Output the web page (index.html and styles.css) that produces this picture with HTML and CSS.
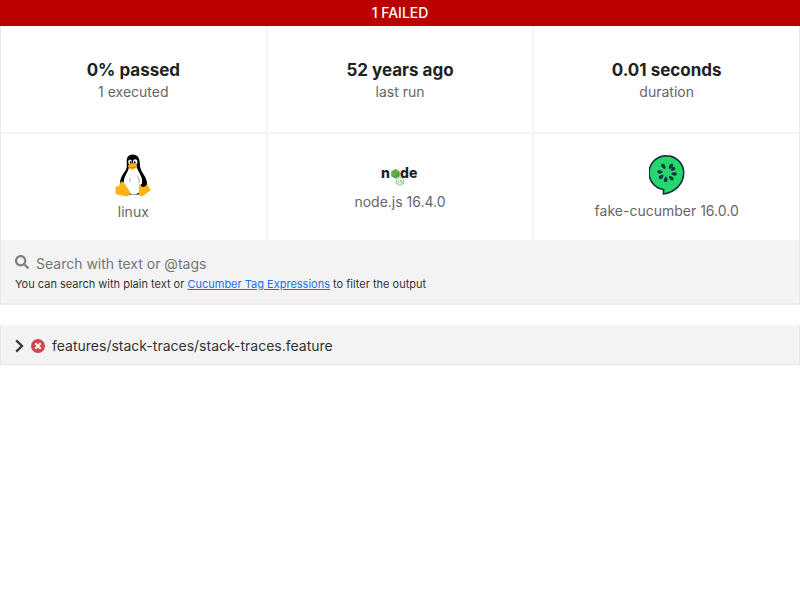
FILE: index.html
```html
<!DOCTYPE html>
<html lang="en">
<head>
  <meta charset="utf-8">
  <title>Cucumber Report</title>
  <link rel="stylesheet" href="styles.css">
</head>
<body>
  <header class="banner">1 FAILED</header>
  <main>
    <section class="report">
      <dl class="summary">
        <div class="cell"><dt class="value">0% passed</dt><dd class="label">1 executed</dd></div>
        <div class="cell"><dt class="value">52 years ago</dt><dd class="label">last run</dd></div>
        <div class="cell"><dt class="value">0.01 seconds</dt><dd class="label">duration</dd></div>
        <div class="cell icon-cell">
          <dt class="logo">
            <svg width="36" height="43" viewBox="0 -1 36 43" overflow="visible" aria-hidden="true">
              <path fill="#000" d="M17.5 0.5C13.600 .5 11.500 3.500 11.700 7.500C11.800 11 12.200 13.500 10.800 16C8.500 19.500 6 22.500 5.300 26.500C4.500 30 4.800 33 6.500 36L14 40.500H24L31 35C33 31 32 25.500 29.300 21.500C27 18 25.500 15.500 25 12C24.700 9.500 25 6 23.300 3.300C22 1.500 20 .5 17.500 .5Z"/>
              <path fill="#fff" d="M14 13.500C13.500 17 10.500 20 9.300 24.500C8.300 28 8.700 31 10.500 33L15 39.500C18 41 22 40.500 25 38L26 30.500C27.500 30 27.500 27 26.500 23.500C25 19.500 23 17 21.500 13Z"/>
              <ellipse cx="15" cy="8" rx="1.800" ry="2.600" fill="#fff"/>
              <ellipse cx="20.200" cy="8" rx="2.200" ry="2.800" fill="#fff"/>
              <ellipse cx="15.500" cy="8.500" rx=".8" ry="1.200"/>
              <ellipse cx="19.700" cy="8.500" rx=".9" ry="1.300"/>
              <path fill="#fbb416" d="M13 11.800C14 10.500 16 9.300 17.300 9.300C19.200 9.500 21.500 10.500 22.300 11.700C22.500 13.300 18.500 15.800 17 15.800C15.300 15.700 12.700 13.500 13 11.800Z"/>
              <path fill="none" stroke="#9b6500" stroke-width=".6" d="M13.500 12.300C16 14.500 18 14.300 21.800 12"/>
              <path fill="none" stroke="#777" stroke-width=".6" d="M15 23.500V28M22 21.500C24 23.500 24.500 26 24 29"/>
              <path fill="#fbb416" d="M6.500 27.500C8.500 27.500 10 30 11.500 32.700C13 35 15 36.500 14.800 39C14.600 41.800 12 43 9 42C6 41 2.500 41 .8 40C-.3 39 1 37 .6 34.500C.2 32.500 1.500 32.300 3.500 32C5.300 31.200 5 28 6.500 27.500Z"/>
              <path fill="#fbb416" d="M25.300 29.500C25.500 32.500 27.500 33.500 30 32.500C31.500 31.500 31.500 29.500 32.500 30C33.500 31.500 33 33 34.500 34.300C36 35.500 36 36 35 37C32.500 38.500 31 39.500 29.500 41C27.500 43 24.500 42.500 24 40C23.700 37 24.500 34.500 24 31.500C24 30 24.500 29.500 25.300 29.500Z"/>
            </svg>
          </dt>
          <dd class="label">linux</dd>
        </div>
        <div class="cell icon-cell">
          <dt class="logo">
            <svg width="36" height="23" viewBox="0 0 36 23" overflow="visible" aria-hidden="true">
              <g class="wordmark">
                <text x="-1" y="15">n</text>
                <text x="18" y="15">d</text>
                <text x="27" y="15">e</text>
              </g>
              <path fill="#539e43" d="M13.500 6L17.700 8.400V13.200L13.500 15.600L9.300 13.200V8.400Z"/>
              <path fill="#6cc24a" opacity=".5" d="M13.500 6L17.700 8.400L11.500 14.500L9.300 13.200V8.400Z"/>
              <path fill="none" stroke="#85b979" stroke-width=".9" d="M18 14L21.700 16.200V20.300L18 22.400L14.300 20.300V16.200Z"/>
              <path fill="none" stroke="#85b979" stroke-width=".8" d="M16.800 16.500V20.200H15.800M20.200 17H18.500V18.400H20.200V20H18.300"/>
            </svg>
          </dt>
          <dd class="label">node.js 16.4.0</dd>
        </div>
        <div class="cell icon-cell">
          <dt class="logo">
            <svg width="36" height="40" viewBox="0 0 36 40" aria-hidden="true">
              <path fill="#23d96c" stroke="#173647" stroke-width="1.700" d="M17.800 .9A16.900 16.900 0 0 0 14.500 34.500V39C26 37.500 34.700 28.500 34.700 17.800A16.900 16.900 0 0 0 17.800 .9Z"/>
              <g fill="#173647">
                <path d="M20 13.800C19.400 11.500 20.500 8.700 23 8.800C25 9.500 24.500 12 22.900 12.900C22 13.500 21 13.800 20 13.800Z"/>
                <path d="M16.500 13.800C17.100 11.500 16 8.700 13.500 8.800C11.500 9.500 12 12 13.600 12.900C14.500 13.500 15.500 13.800 16.500 13.800Z"/>
                <path d="M14 16.900C12.500 15 9.500 14 8.300 16C7.700 18.200 9.800 19 11.600 18.500C12.500 18.200 13.300 17.600 14 16.900Z"/>
                <path d="M14.500 20C12 19.300 9.200 20.500 9.800 23.200C11 25 13.200 24.200 13.900 22.600C14.300 21.700 14.500 20.900 14.500 20Z"/>
                <path d="M17 21.500C14.900 22.800 14 25.800 16 27.100C18.200 27.500 19 25.300 18.400 23.600C18.100 22.700 17.700 22 17 21.500Z"/>
                <path d="M20 21C19.800 23.500 21.500 26.200 24 25.300C25.500 23.700 24.300 21.900 22.700 21.400C21.800 21.100 20.900 21 20 21Z"/>
                <path d="M22 18.800C23.500 20.700 26.500 21.700 27.700 19.700C28.300 17.500 26.200 16.700 24.400 17.200C23.500 17.500 22.700 18.100 22 18.800Z"/>
                <path d="M21.800 16C24 16.500 26.800 15.200 26.400 12.800C25.200 11.300 23.100 12 22.400 13.500Z"/>
              </g>
            </svg>
          </dt>
          <dd class="label">fake-cucumber 16.0.0</dd>
        </div>
      </dl>
      <form class="search">
        <div class="field">
          <svg width="14" height="14" viewBox="0 0 512 512" aria-hidden="true">
            <path fill="#808080" d="M505 442.700L405.300 343c-4.500-4.500-10.600-7-17-7H372c27.600-35.300 44-79.700 44-128C416 93.100 322.900 0 208 0S0 93.100 0 208s93.100 208 208 208c48.300 0 92.700-16.400 128-44v16.300c0 6.400 2.500 12.500 7 17l99.700 99.700c9.400 9.400 24.600 9.400 33.900 0l28.300-28.300c9.400-9.400 9.400-24.600.1-34zM208 336c-70.700 0-128-57.200-128-128 0-70.700 57.200-128 128-128 70.700 0 128 57.200 128 128 0 70.700-57.200 128-128 128z"/>
          </svg>
          <input type="text" aria-label="Search" placeholder="Search with text or @tags">
        </div>
        <p class="hint">You can search with plain text or <a href="#tag-expressions">Cucumber Tag Expressions</a> to filter the output</p>
      </form>
    </section>
    <button class="feature" type="button" aria-expanded="false">
      <svg width="9" height="14" viewBox="0 0 9 14" aria-hidden="true">
        <path fill="none" stroke="#333" stroke-width="2.200" d="M1.200 1.400L7 7L1.200 12.600"/>
      </svg>
      <svg width="14" height="14" viewBox="0 0 14 14" aria-hidden="true">
        <circle cx="7" cy="7" r="7" fill="#cf484a"/>
        <path stroke="#f3f3f3" stroke-width="2.300" d="M4.300 4.300L9.700 9.700M9.700 4.300L4.300 9.700"/>
      </svg>
      <span>features/stack-traces/stack-traces.feature</span>
    </button>
  </main>
</body>
</html>
```
FILE: styles.css
```css
* {
  box-sizing: border-box;
}

body {
  margin: 0;
  background: #fff;
  color: #222;
  font-family: Inter, "Liberation Sans", sans-serif;
  font-size: 14px;
  line-height: 18px;
}

.banner {
  padding: 4px;
  background: #bb0000;
  color: #fff;
  font-weight: 500;
  text-align: center;
}

.report {
  border: 1px solid #e8e8e8;
  border-top: 0;
  border-bottom: 2px solid #ececec;
}

.summary {
  display: grid;
  grid-template-columns: repeat(3, 1fr);
  gap: 2px;
  margin: 0;
  background: #f3f3f3;
}

.cell {
  display: flex;
  flex-direction: column;
  align-items: center;
  justify-content: center;
  min-height: 106px;
  background: #fff;
}

.icon-cell {
  gap: 7px;
}

.value {
  font-size: 17px;
  font-weight: 700;
  line-height: 26px;
}

.label {
  margin: 0;
  color: #666;
}

.logo svg {
  display: block;
}

.wordmark {
  fill: #222;
  font-size: 14px;
  font-weight: 800;
}

.search {
  padding: 13px 14px 12px;
  background: #f3f3f3;
}

.field {
  display: flex;
  align-items: flex-start;
  gap: 7px;
}

.field svg {
  margin-top: 2px;
}

.field input {
  flex: 1;
  min-width: 0;
  height: 20px;
  padding: 0;
  border: 0;
  background: transparent;
  color: #333;
  font: inherit;
}

.field input::placeholder {
  color: #757575;
}

.hint {
  margin: 4px 0 0;
  color: #333;
  font-size: 11px;
  line-height: 14px;
}

.hint a {
  color: #1671e8;
}

.feature {
  display: flex;
  align-items: center;
  gap: 7px;
  width: 100%;
  margin-top: 20px;
  padding: 12px 14px 9px;
  border: 1px solid #e6e6e6;
  border-top: 0;
  border-radius: 2px;
  background: #f3f3f3;
  color: #333;
  font: inherit;
  text-align: left;
}
```
